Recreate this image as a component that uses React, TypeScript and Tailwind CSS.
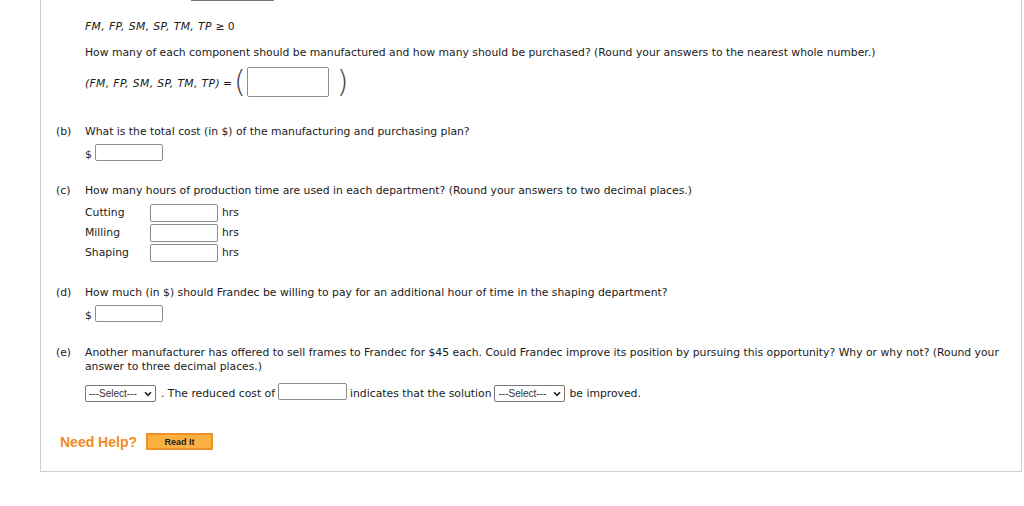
import React from "react";

function Box(props: { w: string, h?: string }) {
    return <span className={`inline-block ${props.w} ${props.h ?? "h-[17px]"} border border-[#8d8d8d] rounded-[2px] bg-white`} />
}

function Select() {
    return <span className="inline-flex items-center justify-between w-[71px] h-[17px] border border-[#777] rounded-[2px] bg-white pl-[3px] pr-[3px] font-['Liberation_Sans',Arial,sans-serif] text-[10px] text-[#333]">
        <span>---Select---</span>
        <svg width="8" height="6" viewBox="0 0 8 6"><path d="M1 1.2 L4 4.4 L7 1.2" fill="none" stroke="#222" strokeWidth="1.6" /></svg>
    </span>
}

function Part(props: { label: string, children: React.ReactNode, className?: string }) {
    return <div className={`flex ${props.className ?? ""}`}>
        <div className="w-[29px] shrink-0">{props.label}</div>
        <div className="flex-1">{props.children}</div>
    </div>
}

function HoursRow(props: { name: string }) {
    return <div className="flex items-center h-[20px]">
        <span className="w-[65px]">{props.name}</span>
        <Box w="w-[68px]" h="h-[18px]" />
        <span className="ml-[4px]">hrs</span>
    </div>
}

export default function App() {
    return <div className="w-[1024px] h-[506px] bg-white text-[#1a1a1a] text-[10.8px] leading-[16px] font-['DejaVu_Sans',Verdana,sans-serif]">
        <div className="ml-[40px] w-[982px] h-[472px] border-l border-r border-b border-[#cfcfcf] pl-[15px]">
            <div className="ml-[135px] w-[83px] h-px bg-[#777]" />

            <div className="pl-[29px]">
                <div className="mt-[18px]"><span className="italic tracking-[0.4px]">FM, FP, SM, SP, TM, TP</span> ≥ 0</div>
                <div className="mt-[10px]">How many of each component should be manufactured and how many should be purchased? (Round your answers to the nearest whole number.)</div>
                <div className="mt-[8px] flex items-center h-[30px]">
                    <span className="italic tracking-[0.35px]">(FM, FP, SM, SP, TM, TP)</span>
                    <span className="ml-[3px]">=</span>
                    <span className="ml-[2px] text-[30px] leading-none font-extralight text-[#444] -translate-y-[2px]">(</span>
                    <span className="ml-[1px]"><Box w="w-[82px]" h="h-[30px]" /></span>
                    <span className="ml-[8px] text-[30px] leading-none font-extralight text-[#444] -translate-y-[2px]">)</span>
                </div>
            </div>

            <Part label="(b)" className="mt-[25px]">
                <div>What is the total cost (in $) of the manufacturing and purchasing plan?</div>
                <div className="mt-[6px] flex items-center h-[17px]">
                    <span>$</span>
                    <span className="ml-[3px]"><Box w="w-[68px]" /></span>
                </div>
            </Part>

            <Part label="(c)" className="mt-[20px]">
                <div>How many hours of production time are used in each department? (Round your answers to two decimal places.)</div>
                <div className="mt-[4px]">
                    <HoursRow name="Cutting" />
                    <HoursRow name="Milling" />
                    <HoursRow name="Shaping" />
                </div>
            </Part>

            <Part label="(d)" className="mt-[22px]">
                <div>How much (in $) should Frandec be willing to pay for an additional hour of time in the shaping department?</div>
                <div className="mt-[6px] flex items-center h-[17px]">
                    <span>$</span>
                    <span className="ml-[3px]"><Box w="w-[68px]" /></span>
                </div>
            </Part>

            <Part label="(e)" className="mt-[22px] leading-[14px]">
                <div className="pr-[14px]">Another manufacturer has offered to sell frames to Frandec for $45 each. Could Frandec improve its position by pursuing this opportunity? Why or why not? (Round your answer to three decimal places.)</div>
                <div className="mt-[11px] flex items-center h-[17px]">
                    <Select />
                    <span className="ml-[5px]">. The reduced cost of</span>
                    <span className="ml-[3px]"><Box w="w-[69px]" /></span>
                    <span className="ml-[3px]">indicates that the solution</span>
                    <span className="ml-[3px]"><Select /></span>
                    <span className="ml-[4px]">be improved.</span>
                </div>
            </Part>

            <div className="mt-[30px] ml-[4px] flex items-center h-[19px]">
                <span className="font-['Liberation_Sans',Arial,sans-serif] font-bold text-[14px] text-[#f08a24]">Need Help?</span>
                <span className="ml-[9px] inline-flex items-center justify-center w-[67px] h-[17px] bg-[#fbb041] border-2 border-[#f0922c] font-['Liberation_Sans',Arial,sans-serif] font-bold text-[9px] text-[#222]">Read It</span>
            </div>
        </div>
    </div>
}
